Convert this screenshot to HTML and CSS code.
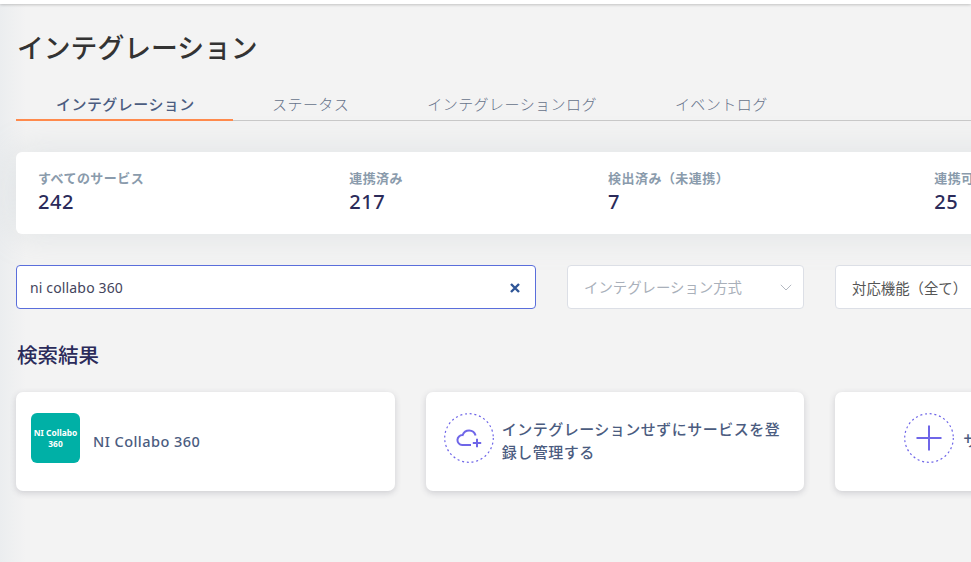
FILE: index.html
```html
<!doctype html>
<html lang="ja">
<head>
    <meta charset="UTF-8">
    <meta name="viewport" content="width=device-width, initial-scale=1.0">
    <title>インテグレーション</title>
    <link rel="stylesheet" href="styles.css">
</head>
<body>
    <div class="topbar"></div>
    <main class="page">
        <h1>インテグレーション</h1>
        <nav class="tabs">
            <a class="tab active">インテグレーション</a>
            <a class="tab">ステータス</a>
            <a class="tab">インテグレーションログ</a>
            <a class="tab">イベントログ</a>
        </nav>
        <section class="stats">
            <div class="stat">
                <div class="label">すべてのサービス</div>
                <div class="value">242</div>
            </div>
            <div class="stat">
                <div class="label">連携済み</div>
                <div class="value">217</div>
            </div>
            <div class="stat">
                <div class="label">検出済み（未連携）</div>
                <div class="value">7</div>
            </div>
            <div class="stat">
                <div class="label">連携可能</div>
                <div class="value">25</div>
            </div>
        </section>
        <div class="filters">
            <div class="search">
                <input type="text" value="ni collabo 360">
                <svg class="clear" width="10" height="10" viewBox="0 0 10 10"><path d="M1 1l8 8M9 1l-8 8"/></svg>
            </div>
            <div class="select method">
                <span>インテグレーション方式</span>
                <svg width="12" height="7" viewBox="0 0 12 7"><path d="M.8 .8L6 6L11.2 .8"/></svg>
            </div>
            <div class="select feature">
                <span>対応機能（全て）</span>
                <svg width="12" height="7" viewBox="0 0 12 7"><path d="M.8 .8L6 6L11.2 .8"/></svg>
            </div>
        </div>
        <h2>検索結果</h2>
        <div class="cards">
            <div class="card service">
                <div class="logo">NI Collabo<br>360</div>
                <p>NI Collabo 360</p>
            </div>
            <div class="card manage">
                <svg class="circle" width="50" height="50" viewBox="0 0 50 50">
                    <circle cx="25" cy="25" r="24.3"/>
                    <path class="cloud" d="M27 32H18.2A4.9 4.9 0 0 1 18.6 22.1C20.8 16 29.6 15.6 31.6 22.6M28.8 30h8.4M33 25.8v8.4"/>
                </svg>
                <p>インテグレーションせずにサービスを登録し管理する</p>
            </div>
            <div class="card request">
                <svg class="circle" width="50" height="50" viewBox="0 0 50 50">
                    <circle cx="25" cy="25" r="24.3"/>
                    <path class="plus" d="M12.5 25h25M25 12.5v25"/>
                </svg>
                <p>サービスをリクエスト</p>
            </div>
        </div>
    </main>
</body>
</html>
```
FILE: styles.css
```css
* {
    box-sizing: border-box;
}
body {
    margin: 0;
    height: 562px;
    overflow: hidden;
    background: linear-gradient(to right, #ebedef, #f3f3f3 26px);
    font-family: "Noto Sans", "Noto Sans CJK JP", sans-serif;
    color: #2b2b5a;
}
.topbar {
    height: 4px;
    background: #fff;
    box-shadow: 0 1px 3px rgba(0, 0, 0, 0.2);
}
.page {
    width: 1230px;
    padding: 0 16px;
}
h1 {
    margin: 24px 0 0 1px;
    font-size: 26.8px;
    line-height: 40px;
    font-weight: 500;
    color: #333;
}
.tabs {
    display: flex;
    height: 53px;
    border-bottom: 1px solid #c8c8c8;
}
.tab {
    height: 53px;
    padding: 24px 39px 0;
    font-size: 15px;
    letter-spacing: 0.45px;
    line-height: 24px;
    font-weight: 300;
    color: #66728a;
}
.tab.active {
    width: 217px;
    padding: 24px 0 0 40px;
    border-bottom: 2px solid #ff8a4c;
    font-weight: 500;
    color: #4b5c80;
}
.stats {
    display: flex;
    justify-content: space-between;
    height: 82px;
    margin-top: 31px;
    padding: 16px 226px 0 22px;
    background: #fff;
    border-radius: 6px;
    box-shadow: 0 0 34px rgba(165, 180, 188, 0.25);
}
.label {
    font-size: 13px;
    letter-spacing: 0.45px;
    line-height: 20px;
    font-weight: 600;
    color: #8a9bac;
}
.value {
    font-size: 20px;
    letter-spacing: 0.6px;
    line-height: 27px;
    font-weight: 500;
}
.filters {
    display: flex;
    gap: 31px;
    margin-top: 31px;
}
.search, .select {
    display: flex;
    align-items: center;
    justify-content: space-between;
    height: 44px;
    background: #fff;
    border: 1px solid #dcdfe6;
    border-radius: 4px;
}
.search {
    width: 520px;
    padding: 0 15px 0 13px;
    border-color: #5a6edb;
}
.search input {
    width: 400px;
    padding: 0;
    border: 0;
    outline: 0;
    font: 14px "Noto Sans", sans-serif;
    letter-spacing: 0.15px;
    color: #44445c;
}
.clear {
    position: relative;
    top: 1px;
    fill: none;
    stroke: #2f5597;
    stroke-width: 2.4;
}
.select {
    width: 237px;
    padding: 0 11px 0 16px;
    font-size: 14.4px;
}
.select svg {
    fill: none;
    stroke: #b4b9c2;
}
.method {
    color: #a9b0ba;
}
.method span {
    margin-top: -2px;
}
.feature {
    color: #555;
}
h2 {
    margin: 31px 0 0 1px;
    font-size: 20.5px;
    line-height: 30px;
    font-weight: 500;
}
.cards {
    display: grid;
    grid-template-columns: repeat(3, minmax(0, 1fr));
    gap: 31px;
    margin-top: 22px;
}
.card {
    display: flex;
    height: 99px;
    background: #fff;
    border-radius: 7px;
    box-shadow: 0 2px 6px rgba(60, 60, 80, 0.2);
}
.card p {
    margin: 0;
    font-size: 15px;
    letter-spacing: 0.5px;
    line-height: 23px;
    font-weight: 500;
    color: #4b5c80;
}
.card.service {
    padding: 21px 15px;
}
.card.service p {
    margin: 17px 0 0 13px;
    font-size: 14.5px;
    letter-spacing: 0.45px;
}
.logo {
    width: 49px;
    height: 50px;
    padding-top: 14px;
    background: #00b0a6;
    border-radius: 6px;
    color: #fff;
    font-size: 8.4px;
    line-height: 11px;
    font-weight: 700;
    text-align: center;
    white-space: nowrap;
}
.card.manage {
    padding: 21px 18px;
}
.card.manage p {
    width: 290px;
    margin: 5px 0 0 8px;
}
.card.request {
    padding: 21px 69px;
}
.card.request p {
    flex: none;
    margin: 16px 0 0 9px;
}
.circle {
    flex: none;
    fill: none;
    stroke: #6f66e8;
}
.circle circle {
    stroke-width: 1.2;
    stroke-dasharray: 2 2.77;
}
.cloud {
    stroke-width: 2;
}
.plus {
    stroke-width: 2;
}
```
